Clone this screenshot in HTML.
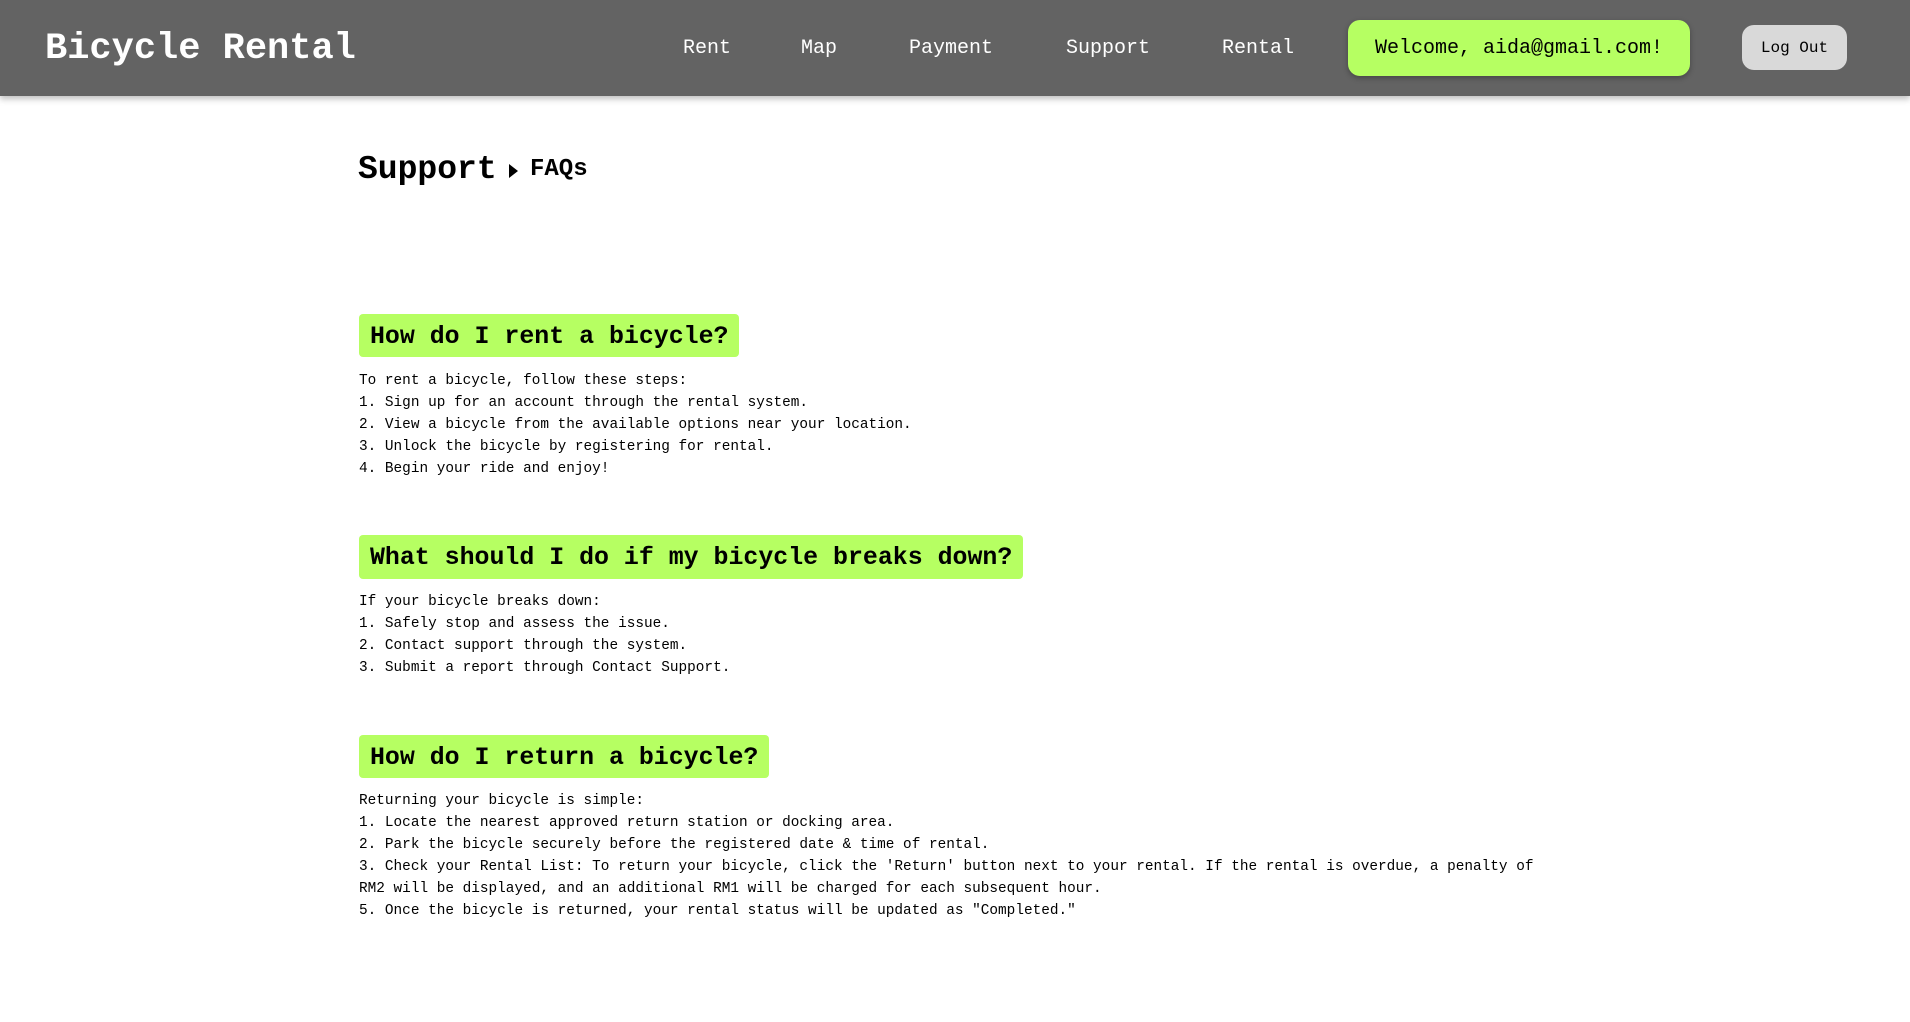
<!DOCTYPE html>
<html><head><meta charset="utf-8"><style>
*{margin:0;padding:0;box-sizing:border-box}
body{width:1910px;height:1022px;background:#fff;font-family:"Liberation Mono","DejaVu Sans Mono",monospace;color:#000;position:relative;overflow:hidden}
.hdr{position:absolute;left:0;top:0;width:1910px;height:96px;background:#636363;box-shadow:0 3px 6px rgba(0,0,0,.25)}
.title{position:absolute;left:45px;top:26px;font-size:37px;font-weight:bold;color:#fff;line-height:46px}
.nav{position:absolute;top:36px;font-size:20px;color:#fff;line-height:26px}
.welcome{position:absolute;left:1348px;top:20px;width:342px;height:56px;background:#b6ff62;border-radius:12px;font-size:20px;line-height:58px;text-align:center;box-shadow:0 2px 6px rgba(0,0,0,.3)}
.logout{position:absolute;left:1742px;top:25px;width:105px;height:45px;background:#d9d9d9;border-radius:12px;font-size:16px;line-height:47px;text-align:center}
.crumb{position:absolute;left:358px;top:148px;font-size:33px;font-weight:bold;line-height:44px}
.tri{position:absolute;left:509px;top:164px;width:0;height:0;border-top:7px solid transparent;border-bottom:7px solid transparent;border-left:9px solid #000}
.faq{position:absolute;left:530px;top:155px;font-size:24px;font-weight:bold;line-height:30px}
.q{position:absolute;left:359px;height:43px;background:#b6ff62;border-radius:4px;font-size:24.9px;font-weight:bold;line-height:46px;padding:0 11px}
.a{position:absolute;left:359px;width:1200px;font-size:14.4px;line-height:22px}
</style></head><body>
<div class="hdr">
<div class="title">Bicycle Rental</div>
<div class="nav" style="left:683px">Rent</div>
<div class="nav" style="left:801px">Map</div>
<div class="nav" style="left:909px">Payment</div>
<div class="nav" style="left:1066px">Support</div>
<div class="nav" style="left:1222px">Rental</div>
<div class="welcome">Welcome, aida@gmail.com!</div>
<div class="logout">Log Out</div>
</div>
<div class="crumb">Support</div>
<div class="tri"></div>
<div class="faq">FAQs</div>

<div class="q" style="top:314px">How do I rent a bicycle?</div>
<div class="a" style="top:370px">To rent a bicycle, follow these steps:<br>1. Sign up for an account through the rental system.<br>2. View a bicycle from the available options near your location.<br>3. Unlock the bicycle by registering for rental.<br>4. Begin your ride and enjoy!</div>

<div class="q" style="top:535px;height:44px">What should I do if my bicycle breaks down?</div>
<div class="a" style="top:591px">If your bicycle breaks down:<br>1. Safely stop and assess the issue.<br>2. Contact support through the system.<br>3. Submit a report through Contact Support.</div>

<div class="q" style="top:735px">How do I return a bicycle?</div>
<div class="a" style="top:790px">Returning your bicycle is simple:<br>1. Locate the nearest approved return station or docking area.<br>2. Park the bicycle securely before the registered date &amp; time of rental.<br>3. Check your Rental List: To return your bicycle, click the 'Return' button next to your rental. If the rental is overdue, a penalty of RM2 will be displayed, and an additional RM1 will be charged for each subsequent hour.<br>5. Once the bicycle is returned, your rental status will be updated as "Completed."</div>
</body></html>
